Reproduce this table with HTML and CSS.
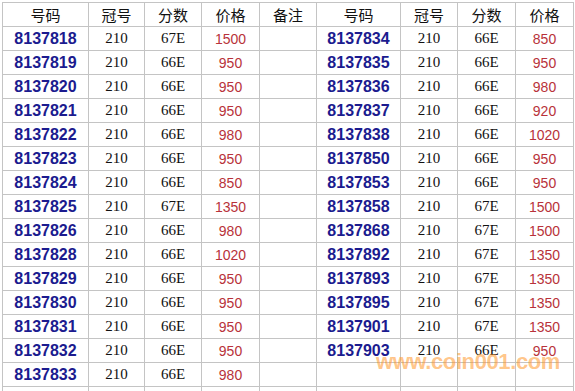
FILE: index.html
```html
<!DOCTYPE html>
<html lang="zh">
<head>
<meta charset="utf-8">
<link rel="stylesheet" href="styles.css">
</head>
<body>
<div class="page">
<div class="grid">
<div class="c h">号码</div><div class="c h">冠号</div><div class="c h">分数</div><div class="c h">价格</div><div class="c h">备注</div><div class="c h">号码</div><div class="c h">冠号</div><div class="c h">分数</div><div class="c h">价格</div>

<div class="c n">8137818</div><div class="c g">210</div><div class="c g">67E</div><div class="c p">1500</div><div class="c"></div><div class="c n">8137834</div><div class="c g">210</div><div class="c g">66E</div><div class="c p">850</div>
<div class="c n">8137819</div><div class="c g">210</div><div class="c g">66E</div><div class="c p">950</div><div class="c"></div><div class="c n">8137835</div><div class="c g">210</div><div class="c g">66E</div><div class="c p">950</div>
<div class="c n">8137820</div><div class="c g">210</div><div class="c g">66E</div><div class="c p">950</div><div class="c"></div><div class="c n">8137836</div><div class="c g">210</div><div class="c g">66E</div><div class="c p">980</div>
<div class="c n">8137821</div><div class="c g">210</div><div class="c g">66E</div><div class="c p">950</div><div class="c"></div><div class="c n">8137837</div><div class="c g">210</div><div class="c g">66E</div><div class="c p">920</div>
<div class="c n">8137822</div><div class="c g">210</div><div class="c g">66E</div><div class="c p">980</div><div class="c"></div><div class="c n">8137838</div><div class="c g">210</div><div class="c g">66E</div><div class="c p">1020</div>
<div class="c n">8137823</div><div class="c g">210</div><div class="c g">66E</div><div class="c p">950</div><div class="c"></div><div class="c n">8137850</div><div class="c g">210</div><div class="c g">66E</div><div class="c p">950</div>
<div class="c n">8137824</div><div class="c g">210</div><div class="c g">66E</div><div class="c p">850</div><div class="c"></div><div class="c n">8137853</div><div class="c g">210</div><div class="c g">66E</div><div class="c p">950</div>
<div class="c n">8137825</div><div class="c g">210</div><div class="c g">67E</div><div class="c p">1350</div><div class="c"></div><div class="c n">8137858</div><div class="c g">210</div><div class="c g">67E</div><div class="c p">1500</div>
<div class="c n">8137826</div><div class="c g">210</div><div class="c g">66E</div><div class="c p">980</div><div class="c"></div><div class="c n">8137868</div><div class="c g">210</div><div class="c g">67E</div><div class="c p">1500</div>
<div class="c n">8137828</div><div class="c g">210</div><div class="c g">66E</div><div class="c p">1020</div><div class="c"></div><div class="c n">8137892</div><div class="c g">210</div><div class="c g">67E</div><div class="c p">1350</div>
<div class="c n">8137829</div><div class="c g">210</div><div class="c g">66E</div><div class="c p">950</div><div class="c"></div><div class="c n">8137893</div><div class="c g">210</div><div class="c g">67E</div><div class="c p">1350</div>
<div class="c n">8137830</div><div class="c g">210</div><div class="c g">66E</div><div class="c p">950</div><div class="c"></div><div class="c n">8137895</div><div class="c g">210</div><div class="c g">67E</div><div class="c p">1350</div>
<div class="c n">8137831</div><div class="c g">210</div><div class="c g">66E</div><div class="c p">950</div><div class="c"></div><div class="c n">8137901</div><div class="c g">210</div><div class="c g">67E</div><div class="c p">1350</div>
<div class="c n">8137832</div><div class="c g">210</div><div class="c g">66E</div><div class="c p">950</div><div class="c"></div><div class="c n">8137903</div><div class="c g">210</div><div class="c g">66E</div><div class="c p">950</div>
<div class="c n">8137833</div><div class="c g">210</div><div class="c g">66E</div><div class="c p">980</div><div class="c"></div><div class="c"></div><div class="c"></div><div class="c"></div><div class="c"></div>
<div class="c"></div><div class="c"></div><div class="c"></div><div class="c"></div><div class="c"></div><div class="c"></div><div class="c"></div><div class="c"></div><div class="c"></div>
</div>
<div class="mark">www.coin001.com</div>
</div>
</body>
</html>
```
FILE: styles.css
```css
html, body {
  margin: 0;
  padding: 0;
  background: #ffffff;
  overflow: hidden;
}
.page {
  position: relative;
  box-sizing: border-box;
  height: 391px;
  overflow: hidden;
  padding: 2px 0 0 2px;
}
.grid {
  display: grid;
  grid-template-columns: 85px 55px 56px 57px 56px 83px 56px 57px 57px;
  grid-auto-rows: 23px;
  gap: 1px;
  padding: 1px;
  background: #c4c4c4;
  width: max-content;
}
.c {
  background: #ffffff;
  display: flex;
  align-items: center;
  justify-content: center;
  white-space: nowrap;
}
.h {
  font-family: "Noto Sans CJK SC", sans-serif;
  font-size: 15px;
  color: #111111;
}
.n {
  font-family: "Liberation Sans", Arial, sans-serif;
  font-weight: bold;
  font-size: 16px;
  color: #1b1b8f;
}
.g {
  font-family: "Liberation Serif", serif;
  font-size: 15px;
  color: #111111;
}
.p {
  font-family: "Liberation Sans", Arial, sans-serif;
  font-size: 14px;
  color: #b8323a;
}
.mark {
  position: absolute;
  left: 376px;
  top: 349px;
  font-family: "Liberation Sans", Arial, sans-serif;
  font-weight: bold;
  font-size: 22px;
  letter-spacing: -0.4px;
  color: rgba(255, 150, 40, 0.55);
  white-space: nowrap;
}
```
